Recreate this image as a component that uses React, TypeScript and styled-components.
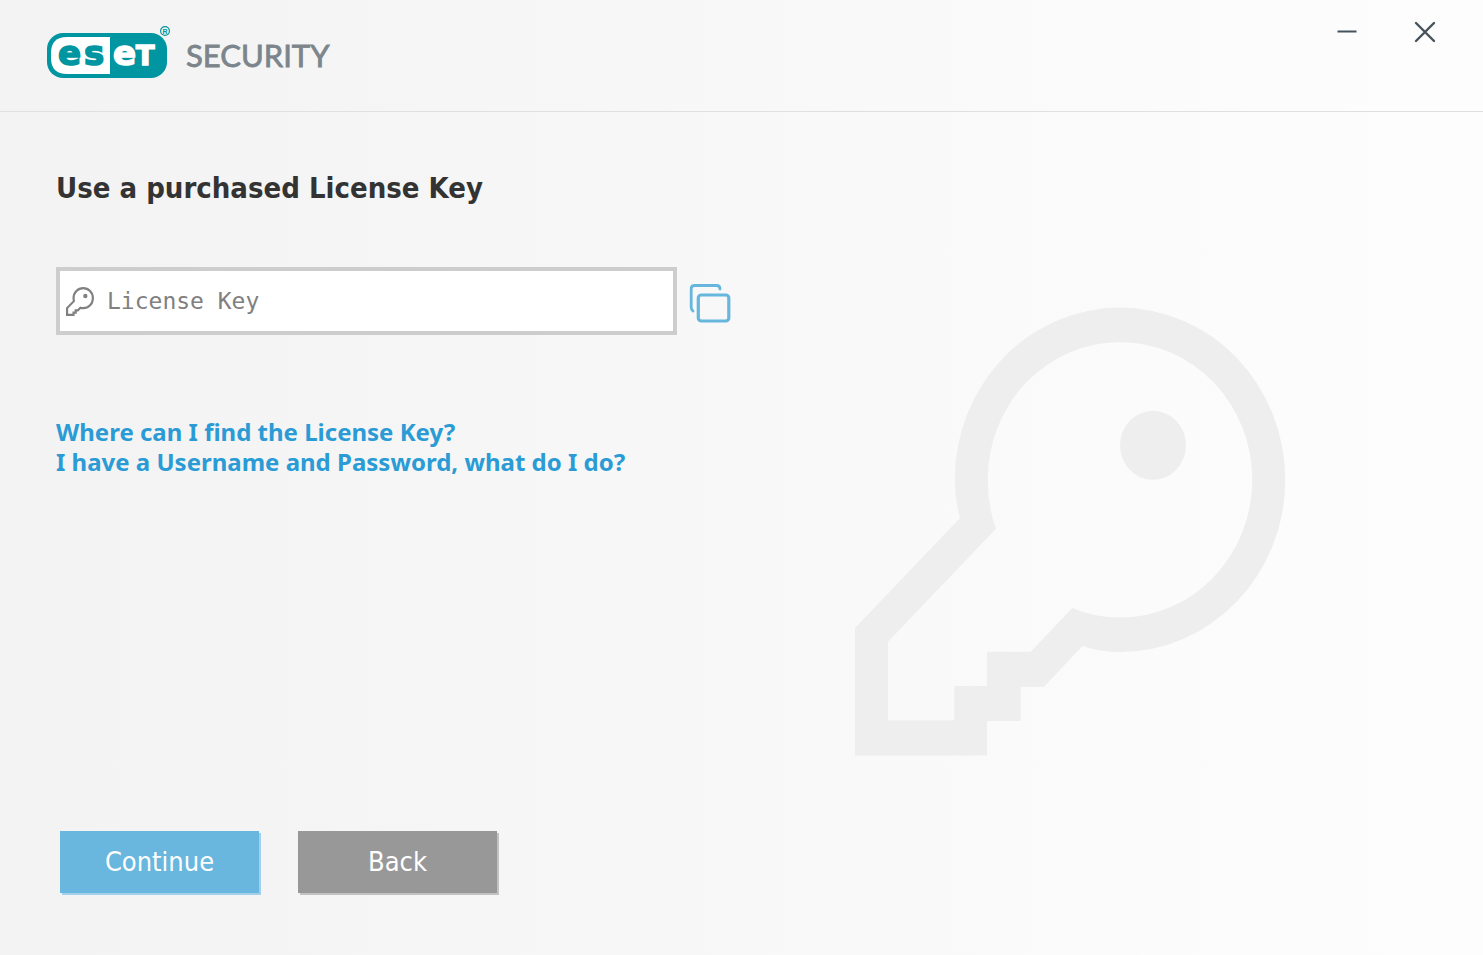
import React from "react";
import styled, { createGlobalStyle } from "styled-components";

const GlobalStyle = createGlobalStyle`
  *, *::before, *::after { box-sizing: border-box; }
  body { margin: 0; }
`;

const uiFont = `"DejaVu Sans Condensed", "DejaVu Sans", Tahoma, sans-serif`;

const Window = styled.div`
  display: flex;
  flex-direction: column;
  min-height: 100vh;
  background: linear-gradient(90deg, #f3f3f3 5%, #fdfdfd 95%);
  font-family: ${uiFont};
  font-stretch: condensed;
  color: #333333;
`;

const Header = styled.header`
  display: flex;
  justify-content: space-between;
  align-items: flex-start;
  height: 112px;
  padding: 12px 38px 0 46px;
  border-bottom: 1px solid #e0e0e0;
`;

const Logo = styled.svg`
  display: block;
  margin-top: 10px;
`;

const WindowControls = styled.div`
  display: flex;
  gap: 38px;
`;

const IconButton = styled.button`
  display: flex;
  align-items: center;
  justify-content: center;
  padding: 0;
  border: 0;
  background: none;
  cursor: pointer;
`;

const ControlButton = styled(IconButton)`
  width: 40px;
  height: 40px;
`;

const Main = styled.main`
  flex: 1;
  display: grid;
  grid-template-columns: minmax(0, 1fr) 431px;
  padding: 0 197px 0 56px;
`;

const Form = styled.form`
  display: flex;
  flex-direction: column;
  padding-top: 58px;
`;

const Title = styled.h1`
  margin: 0;
  font-size: 29px;
  line-height: 36px;
  font-weight: 700;
`;

const FieldRow = styled.div`
  display: flex;
  align-items: center;
  gap: 12px;
  max-width: 676px;
  margin-top: 61px;
`;

const Field = styled.label`
  flex: 1;
  display: flex;
  align-items: center;
  gap: 13px;
  height: 68px;
  padding: 0 6px;
  border: 4px solid #cdcdcd;
  background: #ffffff;
  color: #808080;
`;

const KeyInput = styled.input`
  flex: 1;
  min-width: 0;
  padding: 0;
  border: 0;
  outline: 0;
  background: none;
  font-family: "DejaVu Sans Mono", monospace;
  font-size: 23px;
  line-height: 32px;
  color: #333333;

  &::placeholder {
    color: #808080;
    opacity: 1;
  }
`;

const Links = styled.nav`
  display: flex;
  flex-direction: column;
  align-items: flex-start;
  margin-top: 82px;
`;

const HelpLink = styled.a`
  font-family: "Noto Sans", sans-serif;
  font-size: 24px;
  line-height: 30px;
  font-weight: 700;
  color: #2a9bd5;
  text-decoration: none;
`;

const Illustration = styled.div`
  padding-top: 195px;
  color: #eeeeee;
`;

const Actions = styled.footer`
  display: flex;
  gap: 39px;
  padding: 0 60px 62px;
`;

const ActionButton = styled.button<{ $color: string; $edge: string }>`
  width: 199px;
  height: 62px;
  padding: 0;
  border: 0;
  background: ${(p) => p.$color};
  box-shadow: 2px 2px 0 ${(p) => p.$edge};
  font-family: ${uiFont};
  font-stretch: condensed;
  font-size: 27px;
  line-height: 32px;
  color: #ffffff;
  cursor: pointer;
`;

const KeyShape = styled.svg`
  display: block;
  flex: none;
  fill: currentColor;
`;

function KeyIcon({ width, height }: { width: number; height: number }) {
  return (
    <KeyShape width={width} height={height} viewBox="0 0 431 449" preserveAspectRatio="none" aria-hidden="true">
      <path
        fillRule="evenodd"
        d="M105 211 L0 321 V448.5 H132 V414 H165.7 V379.7 H189 L227.5 339
           Q245 345 265 345 A165.3 172.2 0 0 0 430.3 172.8 A165.3 172.2 0 0 0 265 0.6 A165.3 172.2 0 0 0 99.7 172.8 Q99.7 192 105 211 Z
           M141 221.7 L33 334.7 V413.3 H99.3 V379 H132 V344.7 H175.7 L217.3 301
           Q239 310.6 265 310.6 A132.3 137.8 0 0 0 397.3 172.8 A132.3 137.8 0 0 0 265 35 A132.3 137.8 0 0 0 132.7 172.8 Q132.7 199 141 221.7 Z"
      />
      <ellipse cx="298" cy="138.3" rx="33" ry="34.5" />
    </KeyShape>
  );
}

function BrandLogo() {
  return (
    <Logo width="290" height="60" viewBox="0 0 290 60" role="img" aria-label="ESET Security">
      <rect x="1" y="11" width="120" height="45" rx="16" fill="#0096a1" />
      <path d="M64 15 H21 Q5 15 5 31 V36 Q5 52 21 52 H64 Z" fill="#ffffff" />
      <g fontFamily="DejaVu Sans, sans-serif" fontStretch="normal" fontWeight="700" fontSize="34">
        <g fill="#0096a1" stroke="#0096a1" strokeWidth="1.6">
          <text x="12" y="43">e</text>
          <text x="38" y="43">s</text>
        </g>
        <g fill="#ffffff" stroke="#ffffff" strokeWidth="1.6">
          <text x="67" y="43">e</text>
          <text x="90" y="43" fontSize="27">T</text>
        </g>
      </g>
      <circle cx="119" cy="9" r="4.4" fill="none" stroke="#0096a1" strokeWidth="1.2" />
      <text x="116.5" y="12" fontFamily="Liberation Sans, sans-serif" fontWeight="700" fontSize="7" fill="#0096a1">R</text>
      <text x="140" y="45" fontFamily="Lato, sans-serif" fontSize="31" fill="#7b858b" stroke="#7b858b" strokeWidth="0.8">SECURITY</text>
    </Logo>
  );
}

export default function App() {
  return (
    <Window>
      <GlobalStyle />
      <Header>
        <BrandLogo />
        <WindowControls>
          <ControlButton type="button" aria-label="Minimize">
            <svg width="20" height="20" viewBox="0 0 20 20">
              <path d="M0.5 9.5 H19.5" stroke="#44525c" strokeWidth="2" />
            </svg>
          </ControlButton>
          <ControlButton type="button" aria-label="Close">
            <svg width="22" height="22" viewBox="0 0 22 22">
              <path d="M2 2 L20 20 M20 2 L2 20" stroke="#44525c" strokeWidth="2.4" strokeLinecap="round" />
            </svg>
          </ControlButton>
        </WindowControls>
      </Header>
      <Main>
        <Form id="license-form" onSubmit={(e) => e.preventDefault()}>
          <Title>Use a purchased License Key</Title>
          <FieldRow>
            <Field>
              <KeyIcon width={28} height={29} />
              <KeyInput type="text" placeholder="License Key" aria-label="License Key" />
            </Field>
            <IconButton type="button" aria-label="Paste license key">
              <svg width="43" height="44" viewBox="0 0 43 44" fill="none" stroke="#67b6de">
                <path d="M4 32 Q2.2 31 2.2 28 V10 Q2.2 6.5 5.5 6.5 H27.5 Q31 6.5 31 10" strokeWidth="2.8" strokeLinecap="round" />
                <rect x="9.3" y="16" width="30.5" height="26" rx="3" strokeWidth="3.2" />
              </svg>
            </IconButton>
          </FieldRow>
          <Links>
            <HelpLink href="#find-key">Where can I find the License Key?</HelpLink>
            <HelpLink href="#username">I have a Username and Password, what do I do?</HelpLink>
          </Links>
        </Form>
        <Illustration>
          <KeyIcon width={431} height={449} />
        </Illustration>
      </Main>
      <Actions>
        <ActionButton type="submit" form="license-form" $color="#69b6de" $edge="#a2d0ea">
          Continue
        </ActionButton>
        <ActionButton type="button" $color="#989898" $edge="#c2c2c2">
          Back
        </ActionButton>
      </Actions>
    </Window>
  );
}
